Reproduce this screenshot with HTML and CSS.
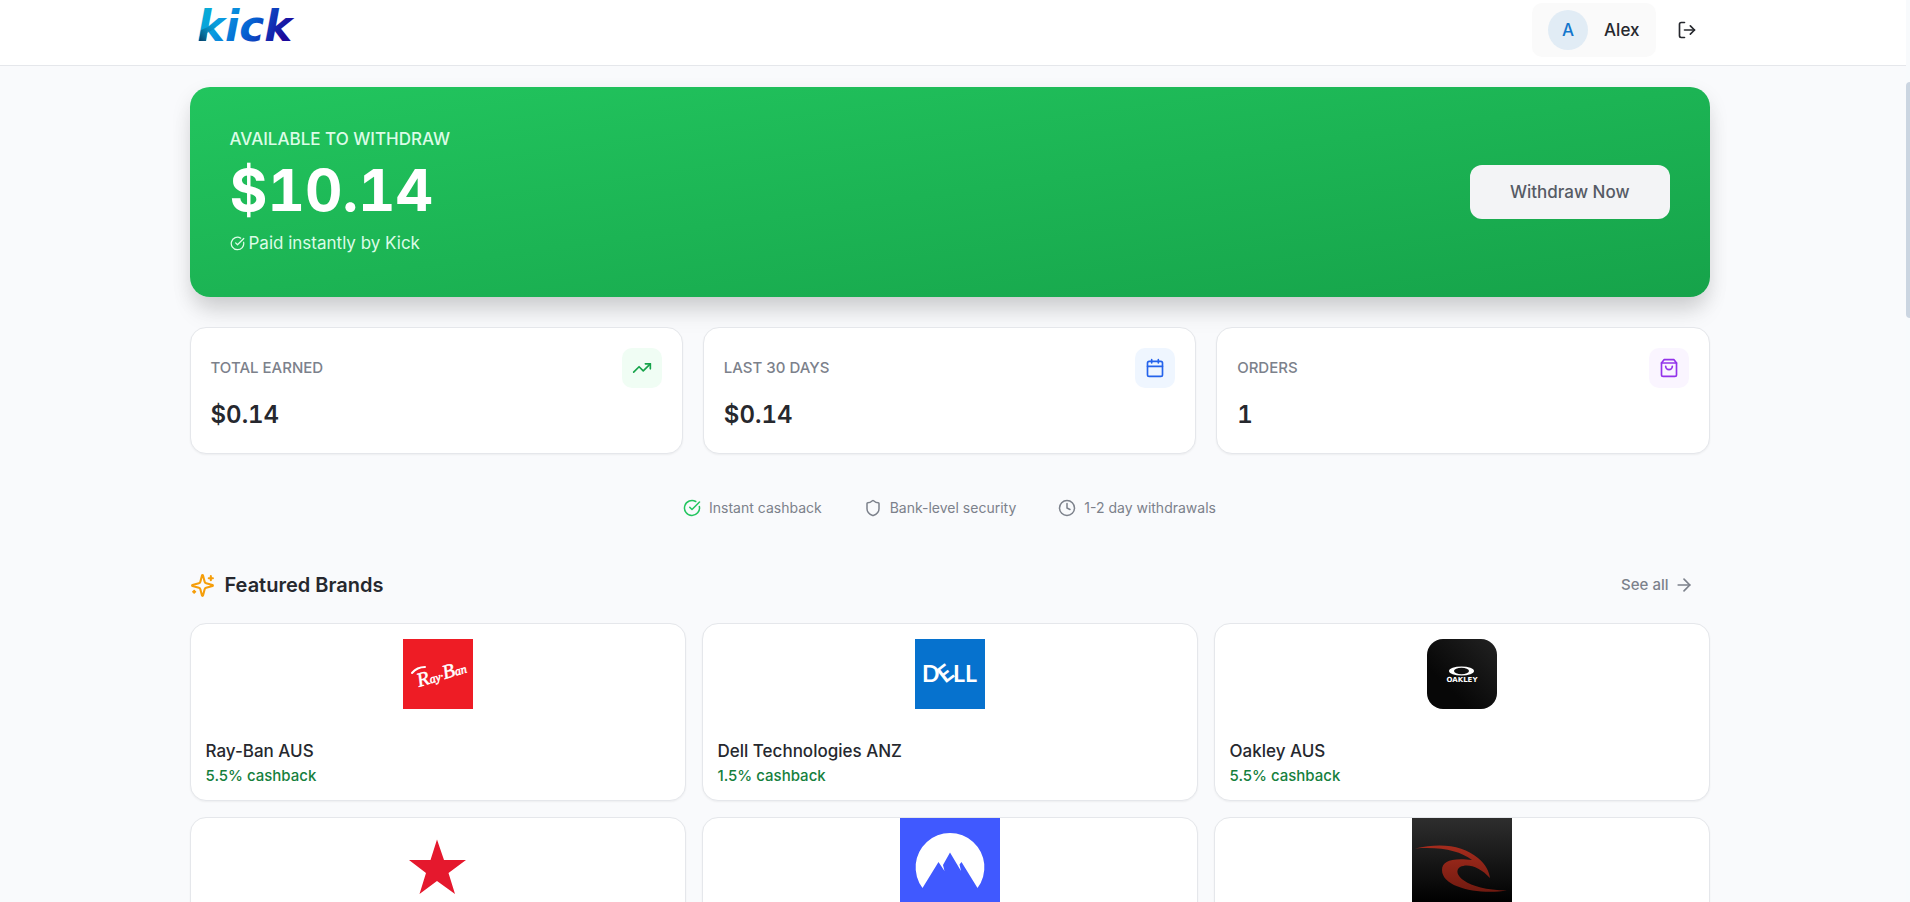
FILE: index.html
```html
<!DOCTYPE html>
<html lang="en">
<head>
<meta charset="utf-8">
<title>Kick</title>
<link rel="stylesheet" href="styles.css">
</head>
<body>
<header class="topbar">
  <div class="container topbar-inner">
    <a class="logo" href="#" aria-label="kick home">
      <svg width="100" height="50" viewBox="0 0 100 50">
        <defs>
          <linearGradient id="brand" x1="0" y1="0" x2="1" y2="0.3">
            <stop offset="0" stop-color="#06b5d0"/>
            <stop offset="0.33" stop-color="#0a9be0"/>
            <stop offset="0.62" stop-color="#0562d2"/>
            <stop offset="1" stop-color="#1a0a9c"/>
          </linearGradient>
          <linearGradient id="fold" x1="0" y1="1" x2="1" y2="0">
            <stop offset="0" stop-color="#063c63"/>
            <stop offset="1" stop-color="#0a86ad" stop-opacity="0"/>
          </linearGradient>
        </defs>
        <text class="logo-word" x="1" y="41" fill="url(#brand)">kick</text>
        <path fill="url(#fold)" d="M3 41 5 30 12 27 20 22 20 28 11 33 10 41Z"/>
      </svg>
    </a>
    <div class="account">
      <button class="profile" type="button"><span class="avatar">A</span><span>Alex</span></button>
      <button class="logout" type="button" aria-label="Log out">
        <svg class="icon" width="20" height="20" viewBox="0 0 24 24"><path d="M9 21H5a2 2 0 0 1-2-2V5a2 2 0 0 1 2-2h4"/><path d="m16 17 5-5-5-5"/><path d="M21 12H9"/></svg>
      </button>
    </div>
  </div>
</header>
<main class="container">
  <section class="hero">
    <div>
      <p class="hero-label">AVAILABLE TO WITHDRAW</p>
      <p class="hero-amount">$10.14</p>
      <p class="hero-note"><svg class="icon" width="15" height="15" viewBox="0 0 24 24"><path d="M21.801 10A10 10 0 1 1 17 3.335"/><path d="m9 11 3 3L22 4"/></svg>Paid instantly by Kick</p>
    </div>
    <button class="withdraw" type="button">Withdraw Now</button>
  </section>

  <section class="stats">
    <article class="card stat">
      <div class="stat-head"><h3>TOTAL EARNED</h3><span class="badge green"><svg class="icon" width="20" height="20" viewBox="0 0 24 24"><path d="m22 7-8.500 8.500-5-5L2 17"/><path d="M16 7h6v6"/></svg></span></div>
      <p class="stat-value">$0.14</p>
    </article>
    <article class="card stat">
      <div class="stat-head"><h3>LAST 30 DAYS</h3><span class="badge blue"><svg class="icon" width="20" height="20" viewBox="0 0 24 24"><path d="M8 2v4M16 2v4"/><rect x="3" y="4" width="18" height="18" rx="2"/><path d="M3 10h18"/></svg></span></div>
      <p class="stat-value">$0.14</p>
    </article>
    <article class="card stat">
      <div class="stat-head"><h3>ORDERS</h3><span class="badge purple"><svg class="icon" width="20" height="20" viewBox="0 0 24 24"><path d="M6 2 3 6v14a2 2 0 0 0 2 2h14a2 2 0 0 0 2-2V6l-3-4Z"/><path d="M3 6h18"/><path d="M16 10a4 4 0 0 1-8 0"/></svg></span></div>
      <p class="stat-value">1</p>
    </article>
  </section>

  <ul class="trust">
    <li><svg class="icon check" width="18" height="18" viewBox="0 0 24 24"><path d="M21.801 10A10 10 0 1 1 17 3.335"/><path d="m9 11 3 3L22 4"/></svg>Instant cashback</li>
    <li><svg class="icon" width="18" height="18" viewBox="0 0 24 24"><path d="M20 13c0 5-3.500 7.500-7.660 8.950a1 1 0 0 1-.67-.01C7.500 20.500 4 18 4 13V6a1 1 0 0 1 1-1c2 0 4.500-1.200 6.240-2.720a1.170 1.170 0 0 1 1.520 0C14.510 3.810 17 5 19 5a1 1 0 0 1 1 1z"/></svg>Bank-level security</li>
    <li><svg class="icon" width="18" height="18" viewBox="0 0 24 24"><circle cx="12" cy="12" r="10"/><path d="M12 6v6l4 2"/></svg>1-2 day withdrawals</li>
  </ul>

  <section>
    <div class="section-head">
      <h2><svg class="icon spark" width="25" height="25" viewBox="0 0 24 24"><path d="M9.937 15.500A2 2 0 0 0 8.500 14.063l-6.135-1.582a.5.5 0 0 1 0-.962L8.500 9.936A2 2 0 0 0 9.937 8.500l1.582-6.135a.5.5 0 0 1 .963 0L14.063 8.500A2 2 0 0 0 15.500 9.937l6.135 1.581a.5.5 0 0 1 0 .964L15.500 14.063a2 2 0 0 0-1.437 1.437l-1.582 6.135a.5.5 0 0 1-.963 0z"/><path d="M20 3v4M22 5h-4M4 17v2M5 18H3"/></svg>Featured Brands</h2>
      <a class="see-all" href="#">See all<svg class="icon" width="20" height="20" viewBox="0 0 24 24"><path d="M5 12h14"/><path d="m12 5 7 7-7 7"/></svg></a>
    </div>
    <div class="brands">
      <a class="card brand" href="#">
        <span class="brand-art"><svg width="70" height="70" viewBox="0 0 70 70"><rect width="70" height="70" fill="#ee1c25"/><path d="M9 34q5-6 13-6" fill="none" stroke="#fff" stroke-width="2" stroke-linecap="round"/><text class="rayban" x="16" y="48" transform="rotate(-17 16 48)" fill="#fff" stroke="#fff" stroke-width="0.500"><tspan class="rayban-cap">R</tspan>ay·<tspan class="rayban-cap">B</tspan>an</text></svg></span>
        <span class="brand-name">Ray-Ban AUS</span><span class="brand-rate">5.5% cashback</span>
      </a>
      <a class="card brand" href="#">
        <span class="brand-art"><svg width="70" height="70" viewBox="0 0 70 70"><rect width="70" height="70" fill="#0672ce"/><g class="dell" fill="#fff"><text x="7" y="43">D</text><text x="30" y="45" transform="rotate(-38 30 45)">E</text><text x="38" y="43">LL</text></g></svg></span>
        <span class="brand-name">Dell Technologies ANZ</span><span class="brand-rate">1.5% cashback</span>
      </a>
      <a class="card brand" href="#">
        <span class="brand-art"><svg width="70" height="70" viewBox="0 0 70 70"><defs><linearGradient id="ink" x1="1" y1="0" x2="0" y2="1"><stop offset="0" stop-color="#222"/><stop offset="0.7" stop-color="#070707"/></linearGradient></defs><rect width="70" height="70" rx="16" fill="url(#ink)"/><path fill="#fff" fill-rule="evenodd" d="M22 32a12.500 4.500 0 1 0 25 0a12.500 4.500 0 1 0-25 0M27 32a7.500 3.200 0 1 0 15 0a7.500 3.200 0 1 0-15 0"/><text class="oakley" x="35" y="43" text-anchor="middle" fill="#fff">OAKLEY</text></svg></span>
        <span class="brand-name">Oakley AUS</span><span class="brand-rate">5.5% cashback</span>
      </a>
      <a class="card brand" href="#" aria-label="Red star brand">
        <span class="brand-art"><svg width="100" height="100" viewBox="0 0 100 100"><path fill="#e5182d" d="M49 21.500 56 42H78L60.500 55 67 76 49 63 31.500 76 38 55 21 42H42.500Z"/></svg></span>
      </a>
      <a class="card brand" href="#" aria-label="Mountain brand">
        <span class="brand-art"><svg width="100" height="100" viewBox="0 0 100 100"><rect width="100" height="100" fill="#4059ff"/><path fill="#fff" d="M22.500 70A34.400 34.400 0 1 1 77.500 70L61.500 44 59.500 46.500 61 53 50 34.500 43 47 44.500 53 38.500 44Z"/></svg></span>
      </a>
      <a class="card brand" href="#" aria-label="Wave brand">
        <span class="brand-art"><svg width="100" height="100" viewBox="0 0 100 100"><defs><linearGradient id="dusk" x1="0" y1="0" x2="0" y2="1"><stop offset="0" stop-color="#2e2e2e"/><stop offset="0.850" stop-color="#000"/></linearGradient><linearGradient id="wave" x1="0" y1="0" x2="0" y2="1"><stop offset="0" stop-color="#a52c1d"/><stop offset="1" stop-color="#711a10"/></linearGradient></defs><rect width="100" height="100" fill="url(#dusk)"/><path fill="url(#wave)" d="M3 30.500C30 24 52 28 66 40C74 47 77 53 78 60C68 49 56 45 48 49C39 55 53 72 95 72.500C68 77 30 70 30 52C30 43 40 39.500 60 42C48 33 30 28.500 3 30.500Z"/></svg></span>
      </a>
    </div>
  </section>
</main>
<div class="scroll-track"><div class="scroll-thumb"></div></div>
</body>
</html>
```
FILE: styles.css
```css
* { box-sizing: border-box; margin: 0; padding: 0; }
html { height: 100%; overflow: hidden; }
body {
  height: 100%;
  overflow: hidden;
  padding-right: 11px;
  background: #f9fafc;
  color: #26282e;
  font: 17px/24px Inter, "Open Sans", sans-serif;
}
a { color: inherit; text-decoration: none; }
button { border: 0; font: inherit; color: inherit; cursor: pointer; }
.icon { flex: none; fill: none; stroke: currentColor; stroke-width: 2; stroke-linecap: round; stroke-linejoin: round; }
.container { max-width: 1520px; margin: 0 auto; }

.topbar { margin-right: -7px; padding-right: 7px; padding-bottom: 5px; background: #fff; border-bottom: 1px solid #e5e7eb; }
.topbar-inner { display: flex; align-items: center; justify-content: space-between; height: 60px; padding-left: 6px; }
.logo { display: flex; align-items: center; padding-bottom: 10px; }
.logo-word { font: italic 700 42px "DejaVu Sans", sans-serif; }
.account { display: flex; align-items: center; gap: 8px; }
.profile { display: flex; align-items: center; gap: 16px; height: 54px; padding: 0 16px; border-radius: 10px; background: #fafafa; font-weight: 500; }
.avatar { display: grid; place-items: center; width: 40px; height: 40px; border-radius: 50%; background: #e1ecf5; color: #1476cc; }
.logout { display: grid; place-items: center; width: 46px; height: 46px; background: none; }

.hero {
  display: flex; align-items: center; justify-content: space-between;
  margin-top: 21px; padding: 40px; border-radius: 20px; color: #fff;
  background: linear-gradient(to bottom right, #22c55e, #16a34a);
  box-shadow: 0 20px 25px -5px rgba(0, 0, 0, .1), 0 8px 20px 0 rgba(0, 0, 0, .1);
}
.hero-label { font-weight: 500; line-height: 24px; color: #dcfce7; }
.hero-amount { margin: 7px 0 8px; font-size: 58px; font-weight: 700; line-height: 64px; font-variant-numeric: tabular-nums; }
.hero-note { display: flex; align-items: center; gap: 4px; line-height: 27px; color: #dcfce7; }
.withdraw { height: 54px; padding: 0 40px; border-radius: 12px; background: #f3f4f6; color: #565b65; font-weight: 500; }

.card { background: #fff; border: 1px solid #e5e7eb; box-shadow: 0 1px 2px rgba(0, 0, 0, .05); }
.stats { display: grid; grid-template-columns: repeat(3, 1fr); gap: 20px; margin-top: 30px; }
.stat { padding: 20px; border-radius: 16px; }
.stat-head { display: flex; align-items: center; justify-content: space-between; }
.stat-head h3 { font-size: 15px; font-weight: 500; color: #7c818b; }
.badge { display: grid; place-items: center; width: 40px; height: 40px; border-radius: 10px; }
.green { background: #f0fdf4; color: #16a34a; }
.blue { background: #eff6ff; color: #2563eb; }
.purple { background: #faf5ff; color: #9333ea; }
.stat-value { margin-top: 9px; font-size: 24px; font-weight: 600; line-height: 36px; font-variant-numeric: tabular-nums; }

.trust { display: flex; justify-content: center; gap: 42px; margin-top: 42px; list-style: none; font-size: 14px; color: #7c818b; }
.trust li { display: flex; align-items: center; gap: 8px; }
.check { color: #22c55e; }

.section-head { display: flex; align-items: center; justify-content: space-between; height: 76px; margin-top: 27px; }
.section-head h2 { display: flex; align-items: center; gap: 10px; font-size: 20px; font-weight: 600; }
.spark { color: #f59e0b; }
.see-all { display: flex; align-items: center; gap: 5px; padding-right: 16px; font-size: 15px; font-weight: 500; color: #7c818b; }
.brands { display: grid; grid-template-columns: repeat(3, 1fr); grid-auto-rows: 178px; gap: 16px; }
.brand { display: flex; flex-direction: column; border-radius: 16px; overflow: hidden; }
.brand-art { display: grid; place-items: center; height: 100px; }
.brand-name { margin: 14px 15px 0; line-height: 26px; font-weight: 500; }
.brand-rate { margin: 0 15px; font-size: 15px; font-weight: 500; color: #15803d; }
.rayban { font: italic 400 12px "Liberation Serif", serif; }
.rayban-cap { font-size: 20px; }
.dell text { font: 700 23px Lato, sans-serif; }
.oakley { font: 700 7px "DejaVu Sans", sans-serif; }

.scroll-track { position: fixed; top: 0; right: 0; bottom: 0; width: 4px; background: #f8fafc; }
.scroll-thumb { height: 236px; margin-top: 82px; border-radius: 4px 0 0 4px; background: #cbd5e1; }
```
